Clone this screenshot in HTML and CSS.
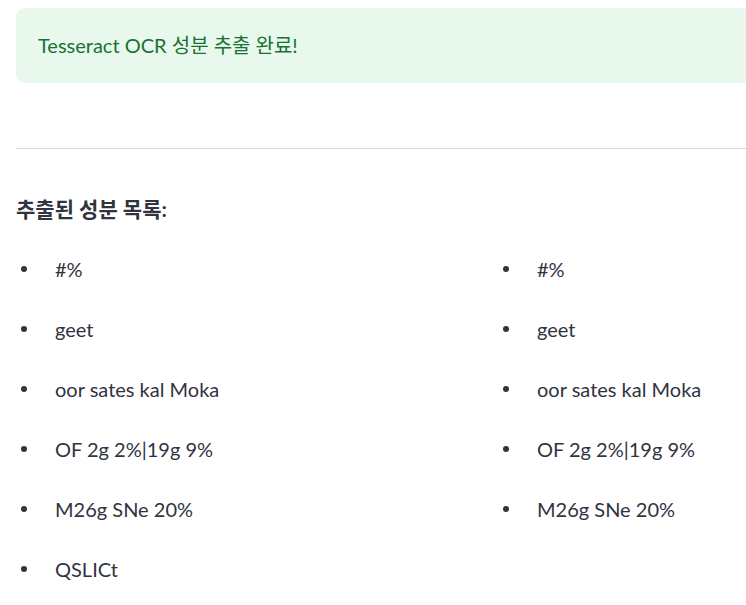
FILE: index.html
```html
<!DOCTYPE html>
<html lang="ko">
<head>
<meta charset="utf-8">
<link rel="stylesheet" href="styles.css">
</head>
<body>
<main class="page">
  <div class="alert-success">Tesseract OCR 성분 추출 완료!</div>
  <hr class="divider">
  <h3 class="list-title">추출된 성분 목록:</h3>
  <div class="columns">
    <ul class="items">
      <li>#%</li>
      <li>geet</li>
      <li>oor sates kal Moka</li>
      <li>OF 2g 2%|19g 9%</li>
      <li>M26g SNe 20%</li>
      <li>QSLICt</li>
    </ul>
    <ul class="items">
      <li>#%</li>
      <li>geet</li>
      <li>oor sates kal Moka</li>
      <li>OF 2g 2%|19g 9%</li>
      <li>M26g SNe 20%</li>
    </ul>
  </div>
</main>
</body>
</html>
```
FILE: styles.css
```css
html, body {
  margin: 0;
  padding: 0;
  background: #ffffff;
  overflow: hidden;
}
body {
  font-family: "Lato", "Noto Sans CJK KR", sans-serif;
  color: #31333f;
  font-size: 20px;
}
.page {
  padding: 8px 0 0 16px;
  width: 960px;
}
.alert-success {
  box-sizing: border-box;
  height: 75px;
  display: flex;
  align-items: center;
  padding: 0 22px 2px 22px;
  background: #e8f8ec;
  color: #177233;
  border-radius: 9px;
  font-size: 20px;
  line-height: 30px;
}
.divider {
  margin: 65px 0 0 0;
  border: none;
  border-top: 1px solid #d6d6d9;
  height: 0;
}
.list-title {
  margin: 45px 0 0 0;
  font-size: 21px;
  line-height: 30px;
  font-weight: 700;
}
.columns {
  display: grid;
  grid-template-columns: 462px 462px;
  column-gap: 20px;
  margin-top: 30px;
}
.items {
  list-style: none;
  margin: 0;
  padding: 0;
  display: flex;
  flex-direction: column;
  gap: 30px;
}
.items li {
  display: flex;
  align-items: center;
  line-height: 30px;
  height: 30px;
}
.items li::before {
  content: "";
  width: 6px;
  height: 6px;
  border-radius: 50%;
  background: #31333f;
  margin-left: 5px;
  margin-right: 28px;
  flex: none;
}
```
